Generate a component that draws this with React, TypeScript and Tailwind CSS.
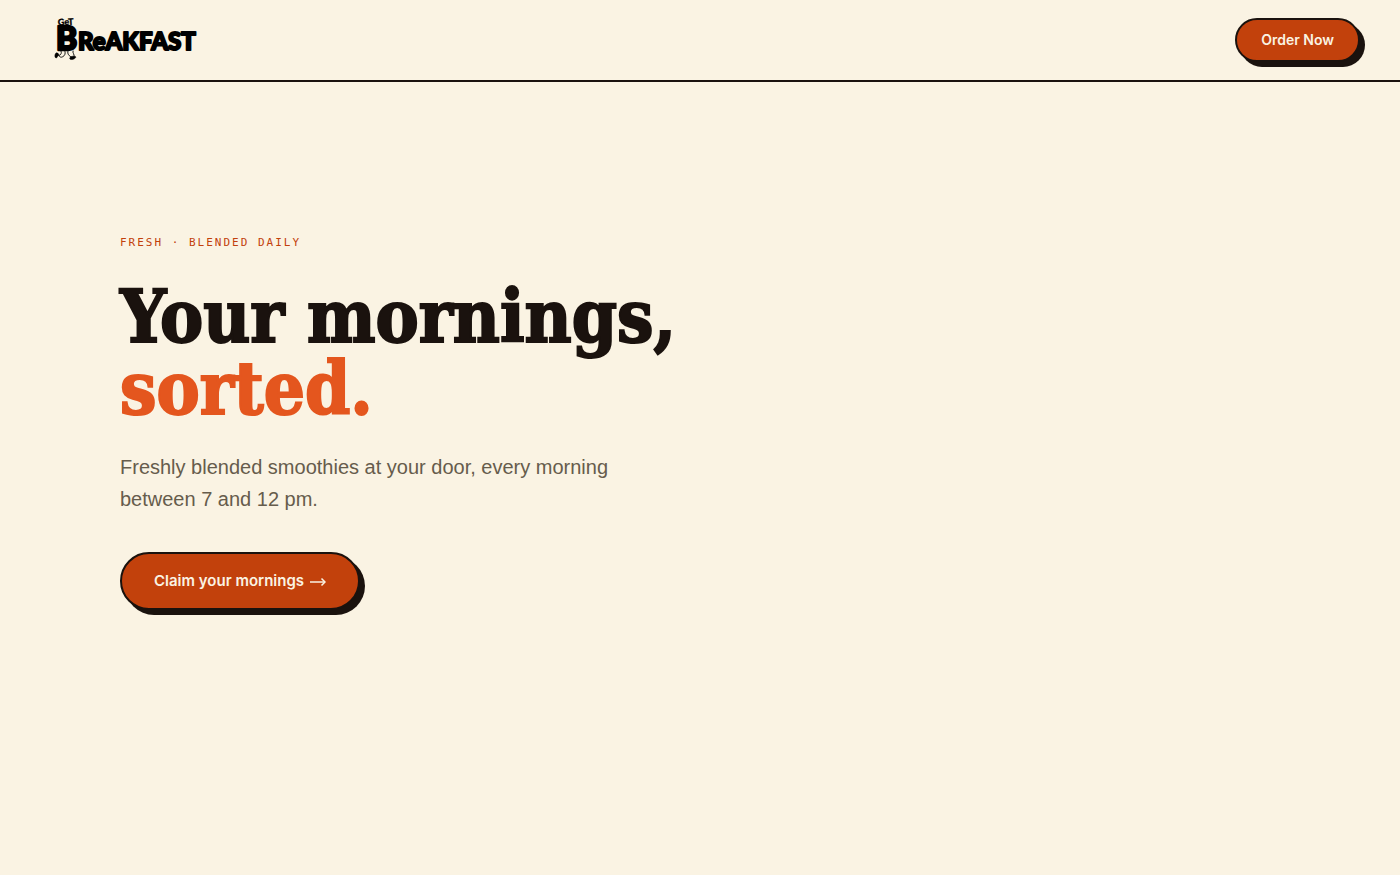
import React from "react";

function Logo() {
  return (
    <svg
      viewBox="0 0 144 48"
      className="h-12 w-36"
      role="img"
      aria-label="Get Breakfast"
      fill="#000"
      stroke="#000"
      strokeLinejoin="round"
      fontFamily="Lato, 'Liberation Sans', sans-serif"
      fontWeight="900"
    >
      <text x="4" y="9" fontSize="9" strokeWidth="0.3" transform="rotate(-3 12 8)">
        GeT
      </text>
      <text x="2" y="34" fontSize="32" strokeWidth="2.4">
        B
      </text>
      <text x="24" y="34" fontSize="24" strokeWidth="2">
        ReAKFAST
      </text>
      <g fill="none" strokeWidth="0.9" strokeLinecap="round">
        <path d="M7 35c1 2 0 4-2 4.500" />
        <path d="M4 38c1 3 3 4 5 2.500 2-1 2.500-3 2-5" />
        <path d="M14 35c-1 3 1 5 4 6.500" />
        <path d="M19 35c-1 2 2 3 1 6" />
      </g>
      <path d="M2 37c1.500-.5 2.500.5 2.500 2L2.500 42C1 42.500 0 39 2 37z" strokeWidth="0.5" />
      <path d="M16 41.500c1-1.500 4-1.500 5.500-1 1 1-1 2.500-3 3-2 .3-3.500-.5-2.500-2z" strokeWidth="0.5" />
    </svg>
  );
}

export default function App() {
  return (
    <div className="flex min-h-screen flex-col bg-[#faf3e3] font-['Liberation_Sans',Arial,sans-serif] text-[#1a120e]">
      <header className="flex items-center justify-between border-b-2 border-[#1a120e] py-4 pr-10 pl-[54px]">
        <a href="#home">
          <Logo />
        </a>
        <button
          type="button"
          className="h-11 rounded-full border-2 border-[#1a120e] bg-[#c2410c] px-6 font-['Inter',sans-serif] text-sm font-semibold text-[#faf3e3] shadow-[5px_5px_0_#1a120e]"
        >
          Order Now
        </button>
      </header>

      <main className="flex flex-1 flex-col items-start px-[120px] pt-[153px] pb-24">
        <p className="font-['DejaVu_Sans_Mono',monospace] text-[11px] leading-4 tracking-[2px] text-[#c2410c] uppercase">
          Fresh · Blended Daily
        </p>
        <h1 className="mt-[30px] font-['DejaVu_Serif_Condensed','DejaVu_Serif',serif] text-[72px] leading-[72px] font-bold [-webkit-text-stroke:2px_currentColor]">
          Your mornings,
          <br />
          <span className="text-[#e4561e]">sorted.</span>
        </h1>
        <p className="mt-[26px] max-w-[520px] text-xl leading-8 text-[#665c4c]">
          Freshly blended smoothies at your door, every morning between 7 and 12 pm.
        </p>
        <button
          type="button"
          className="mt-[37px] flex h-[58px] items-center gap-1.5 rounded-full border-2 border-[#1a120e] bg-[#c2410c] px-8 font-['Inter',sans-serif] text-[15px] font-semibold text-[#faf3e3] shadow-[5px_5px_0_#1a120e]"
        >
          Claim your mornings
          <svg
            viewBox="0 0 16 12"
            className="h-3 w-4"
            fill="none"
            stroke="currentColor"
            strokeWidth="1.5"
            aria-hidden="true"
          >
            <path d="M0 7h15" />
            <path d="M11.500 3.500 15 7l-3.500 3.500" />
          </svg>
        </button>
      </main>
    </div>
  );
}
